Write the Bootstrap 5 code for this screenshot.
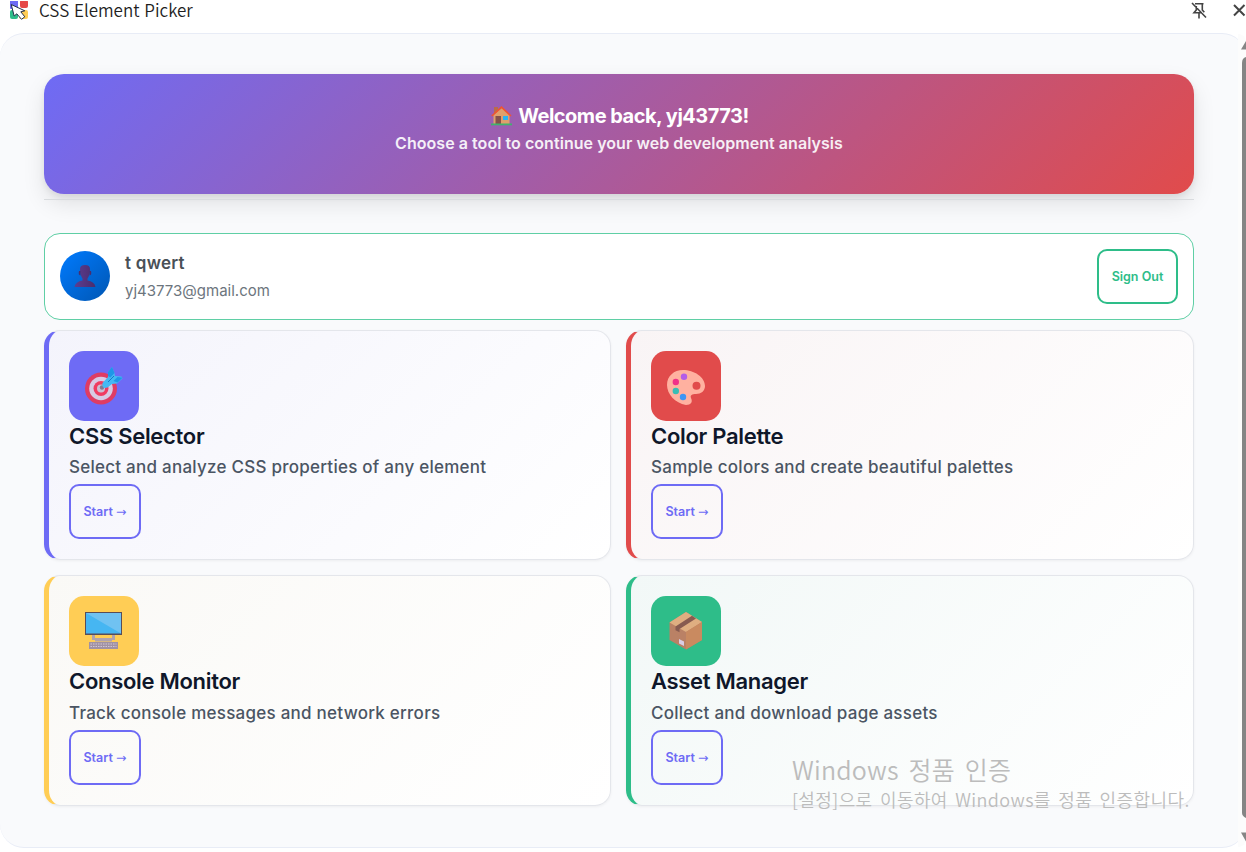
<!DOCTYPE html>
<html lang="en">
<head>
<meta charset="utf-8">
<meta name="viewport" content="width=device-width, initial-scale=1">
<title>CSS Element Picker</title>
<link href="https://cdn.jsdelivr.net/npm/bootstrap@5.3.0/dist/css/bootstrap.min.css" rel="stylesheet">
<style>
body{font-family:Inter,"Noto Sans CJK KR",sans-serif;background:#fff;height:852px;overflow:hidden;color:#0f172a}
.titlebar{height:33px;padding:0 0 12px 10px}
.titlebar .app-name{font:400 17px/21px "Noto Sans CJK KR","Noto Sans",sans-serif;font-weight:350;color:#1f1f1f;margin:0 0 2px 11px;white-space:nowrap;word-spacing:1px}
.titlebar .pin{margin:0 24px 2px 0}
.titlebar .close-x{margin:0 -1px 2px 0}
.panel{height:815px;border:solid #e8ecf6;border-width:1px 0;border-radius:24px;background:#f9fafc;padding:40px 0 0 44px;position:relative}
.content{width:1150px}
.hero{height:120px;border-radius:20px;background:linear-gradient(135deg,#6e6bf5 0%,#e14b4b 100%);box-shadow:0 10px 22px rgba(0,0,0,.1),0 3px 6px rgba(0,0,0,.07);color:#fff;padding-top:29px}
.hero h1{font-size:20px;line-height:26px;font-weight:700;letter-spacing:-.5px;margin:0;padding-left:2px}
.hero h1 svg{margin-right:6px}
.hero p{font-size:16px;line-height:24px;font-weight:600;margin:2px 0 0;opacity:.9;letter-spacing:.05px}
.rule{height:1px;background:#d9dcdf;margin:5px 0 33px;position:relative}
.user{height:87px;border:1px solid #5fcfa5;border-radius:16px;background:#fff;padding:0 15px;margin-bottom:10px}
.avatar{width:50px;height:50px;background:linear-gradient(135deg,#007bff,#0056b3);margin:0 15px 1px 0}
.user .who{font-size:17px;line-height:24px;font-weight:600;color:#495057;letter-spacing:.25px}
.user .mail{font-size:15px;line-height:22px;color:#6c757d;margin-top:5px}
.btn-box{height:55px;border:2px solid #6e6bf5;border-radius:10px;color:#6e6bf5;background:transparent;font-size:12.500px;line-height:18px;font-weight:600;padding:1px 0 0}
.btn-box.out{border-color:#2ebd89;color:#2ebd89;width:81px}
.btn-box .arrow{font-family:"DejaVu Sans",sans-serif;font-size:12.500px;line-height:1;font-weight:400}
.tools{display:grid;grid-template-columns:567px 568px;gap:15px;grid-template-rows:230px 231px}
.tool{border:1px solid #e4e6eb;border-left:5px solid var(--c);border-radius:16px;padding:20px;background:linear-gradient(135deg,var(--t) 0%,#fff 100%);box-shadow:0 1px 3px rgba(0,0,0,.05)}
.tool .pic{width:70px;height:70px;border-radius:15px;background:var(--c)}
.tool h2{font-size:22px;line-height:28px;font-weight:600;letter-spacing:-.3px;margin:1px 0 5px}
.tool p{font-size:17px;line-height:24px;font-weight:500;color:#4b5563;margin:0 0 5px;letter-spacing:.25px}
.tool .btn-box{width:72px;white-space:nowrap}
.t-violet{--c:#6e6bf5;--t:#f4f4fc}.t-red{--c:#e14b4b;--t:#f9f4f5}
.t-amber{--c:#ffcd55;--t:#faf9f6}.t-green{--c:#2ebd89;--t:#f2f8f7}
.tool.lower h2{margin-bottom:6px}
.scroll{position:absolute;right:0;top:0;width:8px;height:813px;background:#fcfcfc;border-radius:0 22px 22px 0}
.scroll svg{display:block}
.watermark{position:absolute;left:792px;top:752px;color:#bcbcbc;font-family:"Noto Sans CJK KR",sans-serif;font-weight:350;white-space:nowrap}
.watermark .big{font-size:25px;line-height:34px;letter-spacing:.2px;word-spacing:4px}
.watermark .sm{font-size:18px;line-height:26px;letter-spacing:.4px;word-spacing:3px}
</style>
</head>
<body>
<header class="titlebar d-flex align-items-center">
  <svg width="18" height="20" viewBox="0 0 18 20"><rect width="8" height="9" y="-1" rx="1" fill="#6e6bf5"/><rect x="10" width="8" height="8" y="-1" rx="2" fill="#e54848"/><rect y="9" width="8" height="9" rx="2" fill="#2ebd89"/><rect x="9" y="9" width="9" height="9" rx="2" fill="#ffcd55"/><path d="M1.200 3.500l3 11.500 2.600-2.200 4.700 5.500 3.300-2.500-4-5 4-1z" fill="#fff" stroke="#25304a" stroke-width="1"/></svg>
  <span class="app-name">CSS Element Picker</span>
  <svg class="pin ms-auto" width="16" height="18" viewBox="0 0 16 18" fill="none" stroke="#444" stroke-width="1.600"><path d="M4 2.800h8.500M11.300 3v6l2 2.300M5.300 5v4L3 11.700h8M8 12v5.500M1 2l14 14.500"/></svg>
  <svg class="close-x" width="16" height="16" viewBox="0 0 16 16" stroke="#444" stroke-width="2"><path d="M3 3l10.500 10.500M13.500 3L3 13.500"/></svg>
</header>
<main class="panel">
  <div class="content">
    <section class="hero text-center">
      <h1 class="d-flex justify-content-center align-items-center"><svg width="21" height="20" viewBox="0 0 21 20"><path d="M3 1h4v6H3z" fill="#b86c4b"/><path d="M2.500 9L11 2l7.500 7v9h-16z" fill="#dfa06c"/><path d="M.8 10L10.500 1.200 20 10" fill="none" stroke="#f1552e" stroke-width="1.600"/><path d="M4.500 10h5.500v8H4.500z" fill="#85504a"/><path d="M12 10h5v4h-5z" fill="#27b4f5"/><path d="M0 17.500h21v1.800H0z" fill="#3fb36c"/></svg><span>Welcome back, yj43773!</span></h1>
      <p>Choose a tool to continue your web development analysis</p>
    </section>
    <div class="rule"></div>
    <section class="user d-flex align-items-center">
      <div class="avatar rounded-circle d-flex align-items-center justify-content-center"><svg width="22" height="24" viewBox="0 0 22 24"><defs><linearGradient id="sk" x2="1"><stop stop-color="#5b3d91"/><stop offset="1" stop-color="#4b2c6c"/></linearGradient></defs><path d="M6 5q0-4 5-4t5 4q0 6-2.500 9.500v2q7 1 8 6.500H.5q1-5.500 8-6.500v-2Q6 11 6 5z" fill="url(#sk)"/><path d="M5 7h1.500v4.500Q4 11 5 7zm12 0h-1.500v4.500Q18 11 17 7z" fill="#4b2c6c"/></svg></div>
      <div><div class="who">t qwert</div><div class="mail">yj43773@gmail.com</div></div>
      <button class="btn btn-box out ms-auto">Sign Out</button>
    </section>
    <section class="tools">
      <article class="tool t-violet">
        <div class="pic d-flex align-items-center justify-content-center"><svg width="40" height="40" viewBox="0 0 40 40"><circle cx="17" cy="22.500" r="16" fill="#df3c63"/><circle cx="17" cy="22.500" r="11.800" fill="#d8cae4"/><circle cx="17" cy="22.500" r="7.500" fill="#f03b61"/><circle cx="17" cy="22.500" r="4" fill="#cbbfd4"/><circle cx="18" cy="21.500" r="2.200" fill="#87778f"/><path d="M18.500 17l5.500-6V6l4-5 2.500 6 .5 3 6.500.5 1 2-5.500 5-5 .5-4.500 3.500q-6 2-5-4.500z" fill="#44b9f3"/><path d="M24 10V6l4-5 2.500 6-4 4.500zM29.500 15l4-4 5 .8-5 4.700z" fill="#1e96e8"/><path d="M24 16l6-6" stroke="#1677c7"/></svg></div>
        <h2>CSS Selector</h2><p>Select and analyze CSS properties of any element</p>
        <button class="btn btn-box">Start <span class="arrow">→</span></button>
      </article>
      <article class="tool t-red">
        <div class="pic d-flex align-items-center justify-content-center"><svg width="40" height="40" viewBox="0 0 40 40"><path fill-rule="evenodd" d="M17 4c11 0 22 7 22 16 0 5-4 8-9 8-4 0-6 1-5 4 2 4 0 7-5 7C9 37 1 28 1 19S8 4 17 4zM30.500 15.700a4 4 0 1 0 0 8 4 4 0 0 0 0-8z" fill="#ffb1a0"/><circle cx="18" cy="10.700" r="3.200" fill="#b35de8"/><circle cx="9.800" cy="16" r="3.200" fill="#f13189"/><circle cx="9.800" cy="25" r="3.200" fill="#37bdb4"/><circle cx="17" cy="31" r="3.200" fill="#3d95f4"/></svg></div>
        <h2>Color Palette</h2><p>Sample colors and create beautiful palettes</p>
        <button class="btn btn-box">Start <span class="arrow">→</span></button>
      </article>
      <article class="tool t-amber lower">
        <div class="pic d-flex align-items-center justify-content-center"><svg width="40" height="40" viewBox="0 0 40 40"><path d="M1 1h37v23H1z" fill="#594d58"/><path d="M2 2h35v20.500H2z" fill="#46b6f2"/><path d="M2 2h35v20.500z" fill="#70c2f2"/><path d="M8 24h3v3h17v-3h3v5h-3v1.500H11V29H8z" fill="#b0a3ae"/><path d="M5 31h29v7H5z" fill="#a091a4"/><path d="M6.500 33h26M6.500 35.500h26" stroke="#d2c6d2" stroke-width="1" stroke-dasharray="1.500 1"/></svg></div>
        <h2>Console Monitor</h2><p>Track console messages and network errors</p>
        <button class="btn btn-box">Start <span class="arrow">→</span></button>
      </article>
      <article class="tool t-green lower">
        <div class="pic d-flex align-items-center justify-content-center"><svg width="40" height="40" viewBox="0 0 40 40"><path d="M3.500 11.500L20 1l16 10v18L20 38.500 3.500 29z" fill="#ba8165"/><path d="M3.500 11.500L20 1l16 10-16 10z" fill="#dfae81"/><path d="M20 21l16-10v18L20 38.500z" fill="#c98a60"/><path d="M9.500 15.500L26 4.700l4 2.800-16.500 10.500v3.200l-4-2z" fill="#875b50"/><path d="M13 28l5 2.500V35l-5-2.500z" fill="#dacde4"/></svg></div>
        <h2>Asset Manager</h2><p>Collect and download page assets</p>
        <button class="btn btn-box">Start <span class="arrow">→</span></button>
      </article>
    </section>
  </div>
  <div class="scroll"><svg width="8" height="813" viewBox="1 0 8 813"><path d="M4 15.500L9 7v8.500zM4 798.500h5v9z" fill="#858585"/><path d="M9 23Q5 24 5 29v750q0 3 4 5z" fill="#858585"/></svg></div>
</main>
<div class="watermark"><div class="big">Windows 정품 인증</div><div class="sm">[설정]으로 이동하여 Windows를 정품 인증합니다.</div></div>
<script src="https://cdn.jsdelivr.net/npm/bootstrap@5.3.0/dist/js/bootstrap.bundle.min.js"></script>
</body>
</html>
